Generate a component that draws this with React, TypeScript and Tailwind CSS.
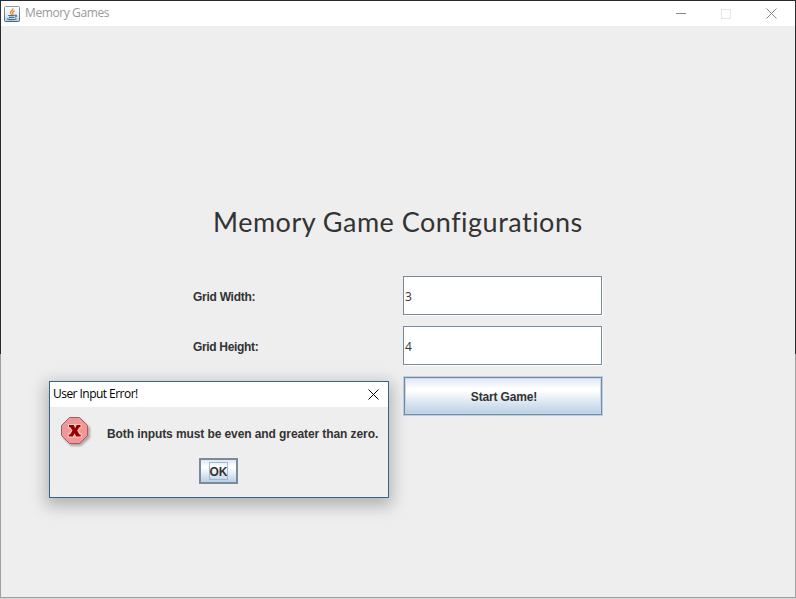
import React from "react";

function JavaIcon() {
  return (
    <svg width="16" height="16" viewBox="0 0 16 16" className="shrink-0">
      <defs>
        <linearGradient id="jb" x1="0" y1="0" x2="0" y2="1">
          <stop offset="0" stopColor="#ffffff" />
          <stop offset="0.55" stopColor="#e9eef2" />
          <stop offset="1" stopColor="#b9cbd9" />
        </linearGradient>
        <linearGradient id="js" x1="0" y1="0" x2="0" y2="1">
          <stop offset="0" stopColor="#8d9aa5" />
          <stop offset="1" stopColor="#3f6b92" />
        </linearGradient>
      </defs>
      <rect x="0.5" y="0.5" width="15" height="15" rx="1" fill="url(#jb)" stroke="url(#js)" />
      <path d="M9 2.3C9.5 4.3 6 4.8 6.5 6.8C6.7 7.6 7.5 7.8 7.5 8.8M10.8 4.8C8.5 5.6 8 6.3 9 7.3C9.3 7.8 9 8.3 8.5 8.8" fill="none" stroke="#ed8326" strokeWidth="1.3" />
      <path d="M4.2 9.5H10.5M10.8 9.3C13 8.8 13 10.8 11 11M5 11.3H10.3M3 12.8C5 14 10 14 12.5 12.7" fill="none" stroke="#3f709a" strokeWidth="1.2" />
    </svg>
  );
}

function Cross({ color }: { color: string }) {
  return (
    <svg width="11" height="11" viewBox="0 0 11 11" className="shrink-0">
      <path d="M0.5 0.5L10.5 10.5M10.5 0.5L0.5 10.5" stroke={color} strokeWidth="1" />
    </svg>
  );
}

function ErrorIcon() {
  return (
    <svg width="34" height="34" viewBox="0 0 34 34" className="shrink-0">
      <defs>
        <filter id="es" x="-20%" y="-20%" width="150%" height="150%">
          <feGaussianBlur stdDeviation="1.3" />
        </filter>
      </defs>
      <path d="M11 3H21L30 12V22L21 30H11L3 22V12Z" fill="#777" opacity="0.6" filter="url(#es)" />
      <path d="M9.5 1.5H19.5L27.5 9.5V19.5L19.5 27.5H9.5L1.5 19.5V9.5Z" fill="#f09898" stroke="#a45c5c" />
      <path d="M8 8H14.8L15.3 9.5L16 8H21.5V12.3H20.3L18.3 14.6L20.4 17.2H21.7V21.5H15.6L14.9 20L14 21.5H7.8V17.2H9.3L11.3 14.6L9.5 12.3H8Z" fill="#ffcccc" />
      <path d="M9 9H13.8L15.2 12.2L16.6 9H20.5V11.2H19.4L17.2 14.5L19.5 18.4H20.7V20.4H16.1L14.5 17.2L13 20.4H8.8V18.4H10.1L12.5 14.5L10.2 11.2H9Z" fill="#990000" />
    </svg>
  );
}

function Field({ value }: { value: string }) {
  return (
    <div className="relative flex h-10 w-[200px] items-center bg-white">
      <div className="absolute top-0 left-0 h-[39px] w-[199px] border border-[#7a8a99]" />
      <div className="absolute top-0 left-[199px] h-px w-px bg-[#eeeeee]" />
      <div className="absolute top-[39px] left-0 h-px w-px bg-[#eeeeee]" />
      <span className="pt-[2px] pl-[2px] font-['Open_Sans','Noto_Sans',sans-serif] text-[12px] leading-4">{value}</span>
    </div>
  );
}

export default function App() {
  return (
    <div className="h-[599px] w-[796px] overflow-hidden bg-[#d7d7d7] font-['Liberation_Sans',Arial,sans-serif] text-[#333333]">
      <div className="relative h-[598px] w-[796px] bg-[linear-gradient(to_bottom,#2b2b2b_354px,#a0a0a0_354px)] p-px">
        <header className="flex h-[25px] items-center bg-white pl-[3px]">
          <JavaIcon />
          <span className="mb-px ml-[5px] font-['Open_Sans','Noto_Sans',sans-serif] text-[12px] leading-4 tracking-[-0.4px] text-[#999999]">Memory Games</span>
          <div className="ml-auto flex items-center pr-[18px]">
            <div className="h-px w-[10px] bg-[#888888]" />
            <div className="ml-[35px] h-[10px] w-[10px] border border-[#e6e6e6]" />
            <div className="ml-[35px] flex"><Cross color="#858585" /></div>
          </div>
        </header>

        <main className="h-[571px] bg-[#eeeeee] pt-[176px]">
          <h1 className="ml-[212px] h-[40px] whitespace-nowrap font-['Lato',sans-serif] text-[27px] leading-[40px] font-normal tracking-[0.49px]">Memory Game Configurations</h1>
          <div className="mt-[34px] ml-[192px] grid w-[410px] grid-cols-[210px_200px] gap-y-[10px] text-[12px] font-bold">
            <div className="flex h-10 items-center pt-[2px] tracking-[-0.27px]">Grid Width:</div>
            <div className="font-normal"><Field value="3" /></div>
            <div className="flex h-10 items-center pt-[2px] tracking-[-0.33px]">Grid Height:</div>
            <div className="font-normal"><Field value="4" /></div>
            <div />
            <button className="h-10 w-[200px] border border-[#b8cfe5] font-bold">
              <span className="flex h-full items-center justify-center border border-[#7a8a99] bg-[linear-gradient(to_bottom,#dde8f3_0%,#ffffff_30%,#ffffff_35%,#b8cfe5_100%)] pt-[2px] pl-[2px] tracking-[-0.16px] shadow-[inset_0_0_0_1px_#c8d9e9]">Start Game!</span>
            </button>
          </div>
        </main>

        <div className="absolute top-[381px] left-[49px] h-[117px] w-[340px] border border-[#38648a] bg-[#eeeeee] shadow-[0_5px_15px_3px_rgba(0,0,0,0.25)]">
          <div className="flex h-[25px] items-center justify-between bg-white pr-[10px] pl-[3px]">
            <span className="mb-px font-['Open_Sans','Noto_Sans',sans-serif] text-[12px] leading-4 tracking-[-0.54px] text-black">User Input Error!</span>
            <div className="-mr-px flex"><Cross color="#000000" /></div>
          </div>
          <div className="flex h-[51px] pt-[9px] pl-[10px]">
            <ErrorIcon />
            <p className="mt-[10px] ml-[13px] whitespace-nowrap text-[12px] leading-4 font-bold tracking-[-0.09px]">Both inputs must be even and greater than zero.</p>
          </div>
          <button className="mx-auto mr-[150px] flex h-[26px] w-[39px] items-center justify-center border-2 border-[#7a8a99] bg-[linear-gradient(to_bottom,#dde8f3_0%,#ffffff_30%,#ffffff_35%,#b8cfe5_100%)] text-[12px] font-bold">
            <span className="flex h-[18px] w-[19px] items-center justify-center border border-[#a3b8cc] pt-[2px]">OK</span>
          </button>
        </div>
      </div>
    </div>
  );
}
